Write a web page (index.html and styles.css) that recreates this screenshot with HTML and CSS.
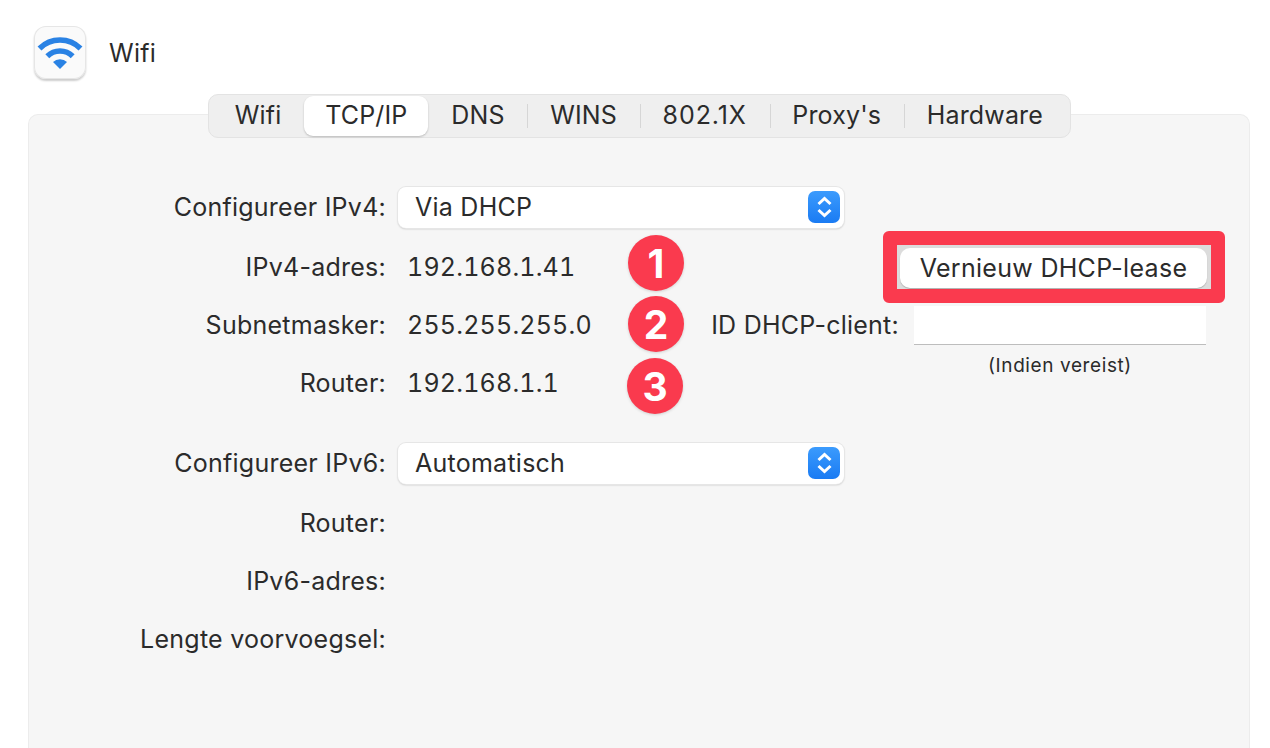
FILE: index.html
```html
<!DOCTYPE html>
<html lang="nl">
<head>
    <meta charset="UTF-8">
    <title>Wifi</title>
    <link rel="stylesheet" href="styles.css">
</head>
<body>
    <header class="top">
        <div class="app-icon">
            <svg width="52" height="53" viewBox="0 0 52 53">
                <path class="wave" d="M5.500 22.500a29 29 0 0 1 41 0"/>
                <path class="wave" d="M13.300 30.300a18 18 0 0 1 25.400 0"/>
                <path class="dot" d="M26 43l-7-7a10 10 0 0 1 14 0z"/>
            </svg>
        </div>
        <div class="app-name">Wifi</div>
    </header>

    <main class="panel">
        <nav class="tabs">
            <a class="tab">Wifi</a>
            <a class="tab active">TCP/IP</a>
            <a class="tab">DNS</a>
            <a class="tab sep">WINS</a>
            <a class="tab sep wide">802.1X</a>
            <a class="tab sep">Proxy's</a>
            <a class="tab sep">Hardware</a>
        </nav>

        <section class="form">
            <label class="lbl row1">Configureer IPv4:</label>
            <div class="select row1">
                <span>Via DHCP</span>
                <span class="arrows">
                    <svg width="32" height="32" viewBox="0 0 32 32"><path d="M10.500 13l6-5.500 6 5.500M10.500 19l6 5.500 6-5.500"/></svg>
                </span>
            </div>

            <label class="lbl row2">IPv4-adres:</label>
            <div class="val row2">192.168.1.41</div>
            <div class="highlight row2">
                <button class="btn">Vernieuw DHCP-lease</button>
            </div>

            <label class="lbl row3">Subnetmasker:</label>
            <div class="val row3">255.255.255.0</div>
            <label class="client-lbl row3">ID DHCP-client:</label>
            <input class="client-input row3" type="text" aria-label="ID DHCP-client">

            <label class="lbl row4">Router:</label>
            <div class="val row4">192.168.1.1</div>
            <div class="hint row4">(Indien vereist)</div>

            <label class="lbl row5">Configureer IPv6:</label>
            <div class="select row5">
                <span>Automatisch</span>
                <span class="arrows">
                    <svg width="32" height="32" viewBox="0 0 32 32"><path d="M10.500 13l6-5.500 6 5.500M10.500 19l6 5.500 6-5.500"/></svg>
                </span>
            </div>

            <label class="lbl row6">Router:</label>
            <label class="lbl row7">IPv6-adres:</label>
            <label class="lbl row8">Lengte voorvoegsel:</label>

            <span class="badge b1">1</span>
            <span class="badge b2">2</span>
            <span class="badge b3">3</span>
        </section>
    </main>
</body>
</html>
```

FILE: styles.css
```css
html, body {
    height: 100%;
}
body {
    margin: 0;
    background-color: #fff;
    color: #2b2b2b;
    font-family: Inter, "Liberation Sans", sans-serif;
    font-size: 25px;
    letter-spacing: 0.25px;
    overflow: hidden;
}

/* header */
.top {
    display: flex;
    align-items: center;
    gap: 23px;
    padding: 26px 0 0 34px;
    height: 53px;
}
.app-icon {
    width: 52px;
    height: 53px;
    border-radius: 12px;
    background-color: #fafafa;
    box-shadow: inset 0 0 0 1px #e6e6e6, 0 2px 2px rgba(0,0,0,0.2);
}
.app-icon svg {
    display: block;
}
.wave {
    fill: none;
    stroke: #2a82e4;
    stroke-width: 5.500;
}
.dot {
    fill: #2a82e4;
}

/* panel and tabs */
.panel {
    box-sizing: border-box;
    height: 634px;
    margin: 35px 20px 0 28px;
    background-color: #f6f6f6;
    border: 1px solid #ececec;
    border-bottom: 0;
    border-radius: 10px 10px 0 0;
}
.tabs {
    display: flex;
    width: fit-content;
    height: 42px;
    margin: -21px 0 0 179px;
    padding: 0 4px 0 3px;
    background-color: #efefef;
    border: 1px solid #e3e3e3;
    border-radius: 10px;
    letter-spacing: 0.15px;
}
.tab {
    position: relative;
    display: flex;
    align-items: center;
    padding: 0 22.800px 2px;
}
.tab.wide {
    letter-spacing: 0.9px;
}
.tab.active {
    padding: 0 21px 2px;
    background-color: #fff;
    border-radius: 9px;
    margin: 1px 0;
    box-shadow: 0 1px 2px rgba(0,0,0,0.22);
}
.tab.sep::before {
    content: "";
    position: absolute;
    top: 9px;
    bottom: 9px;
    left: 0;
    width: 1px;
    background-color: #d6d6d6;
}

/* form */
.form {
    position: relative;
    display: grid;
    grid-template-columns: 357px 323px 205px 292px;
    grid-template-rows: 60px 59px 58px 58px 21px 60px 59px 58px 58px;
    margin-top: 39px;
    align-items: center;
}
.row1 { grid-row: 1; }
.row2 { grid-row: 2; }
.row3 { grid-row: 3; }
.row4 { grid-row: 4; }
.row5 { grid-row: 6; }
.row6 { grid-row: 7; }
.row7 { grid-row: 8; }
.row8 { grid-row: 9; }

.lbl {
    grid-column: 1;
    text-align: right;
}
.val {
    grid-column: 2;
    margin-left: 21px;
    letter-spacing: 0.2px;
    font-feature-settings: "tnum";
}
.select {
    grid-column: 2 / 4;
    display: flex;
    align-items: center;
    justify-content: space-between;
    box-sizing: border-box;
    width: 446px;
    height: 41px;
    margin-left: 12px;
    padding: 0 4px 0 17px;
    background-color: #fff;
    border-radius: 8px;
    box-shadow: 0 0 0 1px #e6e6e6, 0 1px 2px rgba(0,0,0,0.25);
}
.arrows {
    width: 32px;
    height: 32px;
    border-radius: 7px;
    background: linear-gradient(#3b9bfd, #1a7bf3);
}
.arrows svg {
    display: block;
}
.arrows path {
    fill: none;
    stroke: #fff;
    stroke-width: 3;
}

/* red highlight round the DHCP button */
.highlight {
    grid-column: 3 / 5;
    justify-self: end;
    box-sizing: border-box;
    width: 342px;
    height: 72px;
    margin-right: -19px;
    padding: 3px 4px 1px 3px;
    background-color: #dcdcdc;
    border: 14px solid #fa3a4e;
    border-radius: 6px;
    background-clip: padding-box;
}
.btn {
    display: block;
    width: 100%;
    height: 100%;
    padding: 0;
    border: 0;
    border-radius: 10px;
    background-color: #fff;
    color: #2b2b2b;
    font-family: inherit;
    font-size: 25px;
    letter-spacing: 0.3px;
    box-shadow: 0 1px 1px rgba(0,0,0,0.2);
}

.client-lbl {
    grid-column: 3;
    margin-right: 15px;
    text-align: right;
    white-space: nowrap;
}
.client-input {
    grid-column: 4;
    box-sizing: border-box;
    width: 292px;
    height: 39px;
    padding: 0;
    border: 0;
    border-bottom: 1px solid #bdbdbd;
    background-color: #fff;
}
.hint {
    grid-column: 4;
    align-self: start;
    text-align: center;
    font-size: 19px;
    letter-spacing: 0.6px;
}

/* numbered badges */
.badge {
    position: absolute;
    display: flex;
    align-items: center;
    justify-content: center;
    width: 56px;
    height: 56px;
    border-radius: 50%;
    background-color: #fa3a4e;
    color: #fff;
    font-size: 39px;
    font-weight: 700;
    letter-spacing: 0;
    box-shadow: 0 1px 3px rgba(0,0,0,0.15);
}
.b1 { left: 599px; top: 58px; }
.b2 { left: 599px; top: 119px; }
.b3 { left: 598px; top: 181px; }
```
